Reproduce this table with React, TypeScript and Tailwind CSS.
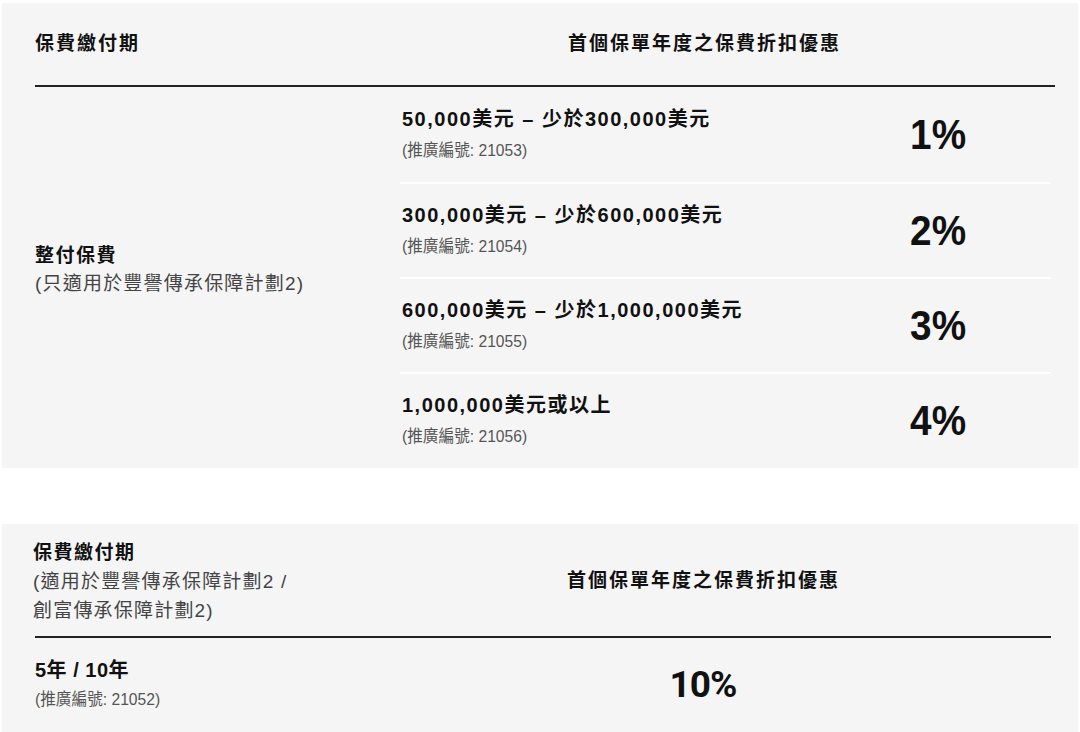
import React from 'react';

const FONT = { fontFamily: '"Liberation Sans", "Noto Sans CJK TC", sans-serif' };

const tiers = [
  { range: '50,000美元 – 少於300,000美元', code: '21053', pct: '1%' },
  { range: '300,000美元 – 少於600,000美元', code: '21054', pct: '2%' },
  { range: '600,000美元 – 少於1,000,000美元', code: '21055', pct: '3%' },
  { range: '1,000,000美元或以上', code: '21056', pct: '4%' },
];

const Code: React.FC<{ code: string }> = ({ code }) => (
  <div className="h-[30px] leading-[30px]">
    <span className="inline-block origin-left scale-x-[0.92] text-[17px] text-[#555]">(推廣編號: {code})</span>
  </div>
);

export default function App() {
  return (
    <div className="w-[1080px] h-[732px] overflow-hidden bg-white text-[#111]" style={FONT}>
      {/* lump sum table */}
      <div className="mt-[3px] ml-[2px] w-[1076px] h-[465px] bg-[#f5f5f6] pl-[33px] pr-[23px]">
        <div className="flex h-[84px] items-center border-b-2 border-[#222] text-[19px] font-bold tracking-[2px]">
          <div className="w-[365px]">保費繳付期</div>
          <div className="pl-[168px]">首個保單年度之保費折扣優惠</div>
        </div>
        <div className="flex">
          <div className="flex w-[365px] flex-col justify-center pb-[14px]">
            <div className="h-[28px] text-[19px] font-bold leading-[28px] tracking-[1.5px]">整付保費</div>
            <div className="h-[28px] text-[19px] leading-[28px] tracking-[1.2px] text-[#444]">(只適用於豐譽傳承保障計劃2)</div>
          </div>
          <div className="mr-[4px] flex-1">
            {tiers.map((t, i) => (
              <div key={t.code} className={`flex h-[95px] items-center pl-[2px] ${i > 0 ? 'border-t-2 border-white' : ''}`}>
                <div className="flex-1">
                  <div className="h-[32px] text-[20px] font-bold leading-[30px] tracking-[1.5px]">{t.range}</div>
                  <Code code={t.code} />
                </div>
                <div className="w-[226px] text-center">
                  <span className="inline-block scale-x-[0.9] text-[43px] font-bold leading-none">{t.pct}</span>
                </div>
              </div>
            ))}
          </div>
        </div>
      </div>

      {/* regular premium table */}
      <div className="mt-[56px] ml-[2px] w-[1076px] h-[210px] bg-[#f5f5f6] pl-[33px] pr-[27px]">
        <div className="flex items-center border-b-2 border-[#222] pt-[14px] pb-[11px]">
          <div className="-ml-[2px] w-[534px]">
            <div className="h-[29px] text-[19px] font-bold leading-[29px] tracking-[1.5px]">保費繳付期</div>
            <div className="h-[29px] text-[19px] leading-[29px] tracking-[1.2px] text-[#444]">(適用於豐譽傳承保障計劃2 /</div>
            <div className="h-[29px] text-[19px] leading-[29px] tracking-[1.2px] text-[#444]">創富傳承保障計劃2)</div>
          </div>
          <div className="text-[19px] font-bold tracking-[2px]">首個保單年度之保費折扣優惠</div>
        </div>
        <div className="flex items-center pt-[17px]">
          <div className="w-[532px]">
            <div className="h-[30px] text-[20px] font-bold leading-[30px] tracking-[0.5px]">5年 / 10年</div>
            <Code code="21052" />
          </div>
          <div className="w-[272px] text-center">
            <span className="text-[37px] font-bold leading-none tracking-tight" style={{ fontFamily: 'Roboto, sans-serif' }}>10%</span>
          </div>
        </div>
      </div>
    </div>
  );
}
